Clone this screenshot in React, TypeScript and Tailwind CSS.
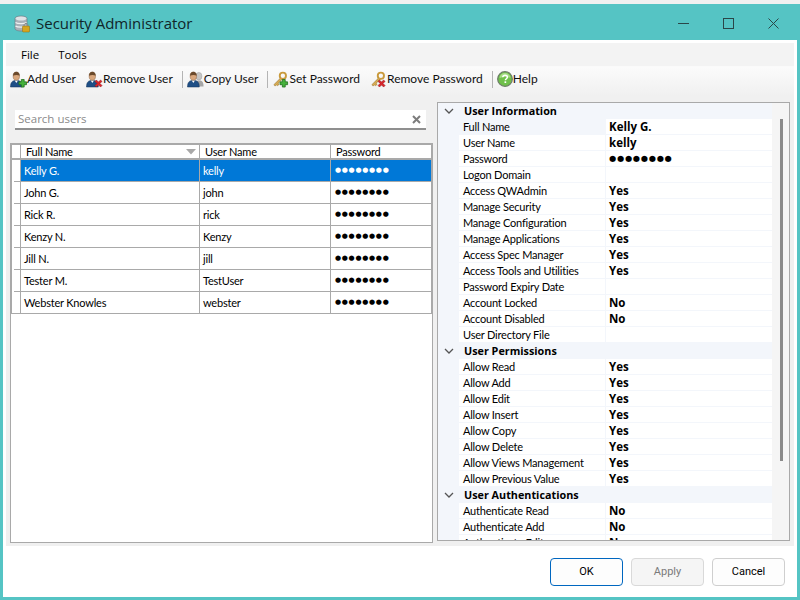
import React from 'react';

const users = [
  { name: 'Kelly G.', user: 'kelly' },
  { name: 'John G.', user: 'john' },
  { name: 'Rick R.', user: 'rick' },
  { name: 'Kenzy N.', user: 'Kenzy' },
  { name: 'Jill N.', user: 'jill' },
  { name: 'Tester M.', user: 'TestUser' },
  { name: 'Webster Knowles', user: 'webster' },
];

const DOTS = '●●●●●●●●';

const sections = [
  {
    title: 'User Information',
    rows: [
      ['Full Name', 'Kelly G.'],
      ['User Name', 'kelly'],
      ['Password', DOTS],
      ['Logon Domain', ''],
      ['Access QWAdmin', 'Yes'],
      ['Manage Security', 'Yes'],
      ['Manage Configuration', 'Yes'],
      ['Manage Applications', 'Yes'],
      ['Access Spec Manager', 'Yes'],
      ['Access Tools and Utilities', 'Yes'],
      ['Password Expiry Date', ''],
      ['Account Locked', 'No'],
      ['Account Disabled', 'No'],
      ['User Directory File', ''],
    ],
  },
  {
    title: 'User Permissions',
    rows: [
      ['Allow Read', 'Yes'],
      ['Allow Add', 'Yes'],
      ['Allow Edit', 'Yes'],
      ['Allow Insert', 'Yes'],
      ['Allow Copy', 'Yes'],
      ['Allow Delete', 'Yes'],
      ['Allow Views Management', 'Yes'],
      ['Allow Previous Value', 'Yes'],
    ],
  },
  {
    title: 'User Authentications',
    rows: [
      ['Authenticate Read', 'No'],
      ['Authenticate Add', 'No'],
      ['Authenticate Edit', 'No'],
    ],
  },
];

const Plus = () => (
  <path d="M9.5 8.5h2.5V6h3v2.5H17.5v3H15V14h-3v-2.5H9.5z" fill="#46b23c" stroke="#1f6b1a" strokeWidth="0.8" />
);

const Cross = () => (
  <path d="M9.5 8l1.5-1.5 2.2 2.2 2.2-2.2L17 8l-2.2 2.2L17 12.4 15.4 14l-2.2-2.2L11 14l-1.5-1.6 2.2-2.2z" fill="#d8272d" stroke="#8a1418" strokeWidth="0.5" />
);

const Person = () => (
  <g>
    <path d="M0.5 16.5c0-4.500 1.500-6.500 4.500-7h3.500c3 .5 4.500 2.500 4.500 7z" fill="#1f4f86" stroke="#123257" strokeWidth="0.5" />
    <path d="M5 9.500l1.700 2.800 1.700-2.800z" fill="#fff" />
    <ellipse cx="6.700" cy="5" rx="3.400" ry="4.300" fill="#d9a77d" stroke="#8a6242" strokeWidth="0.5" />
    <path d="M3.200 4.500c0-3 1.500-4.200 3.500-4.200s3.500 1.200 3.500 4.200C8.700 3.500 5.200 3.500 3.200 4.500z" fill="#6b4a2c" />
  </g>
);

const UserIcon = ({ kind }: { kind: 'add' | 'remove' | 'copy' }) => (
  <svg width="17" height="17" viewBox="0 0 18 17" className="shrink-0">
    {kind === 'copy' && (
      <g opacity="0.75">
        <ellipse cx="12.500" cy="5" rx="3.300" ry="4" fill="#b5b5b5" stroke="#777" strokeWidth="0.5" />
        <path d="M7 16c0-4 2-6 4.500-6.500h3c2 .5 3 2.500 3 6.500z" fill="#8c8c8c" />
      </g>
    )}
    <Person />
    {kind === 'add' && <g transform="translate(0 2.500)"><Plus /></g>}
    {kind === 'remove' && <g transform="translate(0 2.500)"><Cross /></g>}
  </svg>
);

const KeyIcon = ({ kind }: { kind: 'add' | 'remove' }) => (
  <svg width="17" height="17" viewBox="0 0 18 17" className="shrink-0">
    <circle cx="11.500" cy="4.500" r="3.300" fill="none" stroke="#c99a3c" strokeWidth="2" />
    <path d="M9 7L2 14l1.500 1.500L5 14l1 1 1.500-1.500-1-1L11 8" fill="#d9ad55" stroke="#8f6a20" strokeWidth="0.6" />
    {kind === 'add' ? <g transform="translate(-1 2.500)"><Plus /></g> : <g transform="translate(-1 2.500)"><Cross /></g>}
  </svg>
);

const HelpIcon = () => (
  <svg width="16" height="16" viewBox="0 0 16 16" className="shrink-0">
    <circle cx="8" cy="8" r="7.300" fill="#6fc04a" stroke="#6e7f68" strokeWidth="1.300" />
    <path d="M2.500 7a5.500 5 0 0 1 11 0c-3-1.500-8-1.500-11 0z" fill="#a5dd84" />
    <path d="M5.800 6.300C5.900 4.900 6.800 4.200 8.100 4.200c1.400 0 2.300.8 2.300 1.900 0 1.700-2 1.600-2 3.200" fill="none" stroke="#fff" strokeWidth="1.500" />
    <rect x="7.500" y="10.300" width="1.700" height="1.700" fill="#fff" />
  </svg>
);

const AppIcon = () => (
  <svg width="16" height="18" viewBox="0 0 16 18">
    <path d="M1 3.500C1 2 3.500 1 7 1s6 1 6 2.500v10C13 15 10.500 16 7 16s-6-1-6-2.500z" fill="#a9b0b8" stroke="#6f767e" strokeWidth="0.6" />
    <ellipse cx="7" cy="3.500" rx="5.500" ry="2" fill="#dfe3e7" />
    <path d="M1.500 7.500c2 1.500 9 1.500 11 0M1.500 11c2 1.500 9 1.500 11 0" fill="none" stroke="#eef0f2" strokeWidth="1.200" />
    <rect x="8.500" y="11" width="7" height="6" rx="0.800" fill="#d6a51f" stroke="#8f6d10" strokeWidth="0.5" />
    <path d="M10.200 11V9.500a2 2 0 0 1 3.600 0V11" fill="none" stroke="#8b8b8b" strokeWidth="1" />
  </svg>
);

const Sep = () => <div className="w-px h-[17px] bg-[#b4b4b4] ml-[4px] -mr-px" />;

const ToolItem = ({ icon, label }: { icon: React.ReactNode; label: string }) => (
  <div className="flex items-center px-[5px]">
    {icon}
    <span>{label}</span>
  </div>
);

const App = () => {
  return (
    <div className="w-[800px] h-[600px] bg-[#f0f0f0] pt-[4px] overflow-hidden text-[12px] text-black" style={{ fontFamily: 'Lato, "Noto Sans", sans-serif' }}>
      <div className="h-[596px] bg-[#55c4c4] px-[3px] pb-[3px] flex flex-col">
        {/* title bar */}
        <div className="h-[36px] shrink-0 flex items-center pl-[11px] pt-[3px] text-[#10262a]">
          <AppIcon />
          <span className="ml-[6px] text-[15px]" style={{ fontFamily: '"Open Sans", sans-serif' }}>Security Administrator</span>
          <div className="ml-auto flex items-center gap-[34px] pr-[18px]">
            <div className="w-[11px] h-px bg-[#2a4648]" />
            <div className="w-[11px] h-[11px] border border-[#2a4648]" />
            <svg width="11" height="11" viewBox="0 0 11 11">
              <path d="M0.500 0.500l10 10M10.500 0.500l-10 10" stroke="#2a4648" strokeWidth="1" />
            </svg>
          </div>
        </div>

        <div className="flex-1 bg-white flex flex-col px-[3px] pt-[3px]">
          <div className="h-[503px] bg-[#f0f0f0] flex flex-col">
            {/* menu */}
            <div className="h-[24px] flex items-center pl-[15px] gap-[19px] bg-[#f3f3f3] text-[11.500px] border-b border-[#fafafa]" style={{ fontFamily: '"Open Sans", sans-serif' }}>
              <span>File</span>
              <span>Tools</span>
            </div>
            {/* toolbar */}
            <div className="h-[29px] flex items-start pt-[2px] bg-gradient-to-b from-[#fbfbfb] to-[#f0f0f0] text-[12px] text-[#111]">
              <div className="flex items-center h-[20px] -ml-px">
                <ToolItem icon={<UserIcon kind="add" />} label="Add User" />
                <ToolItem icon={<UserIcon kind="remove" />} label="Remove User" />
                <Sep />
                <ToolItem icon={<UserIcon kind="copy" />} label="Copy User" />
                <Sep />
                <ToolItem icon={<KeyIcon kind="add" />} label="Set Password" />
                <ToolItem icon={<KeyIcon kind="remove" />} label="Remove Password" />
                <Sep />
                <ToolItem icon={<HelpIcon />} label="Help" />
              </div>
            </div>

            <div className="flex-1 flex min-h-0 pl-[4px] pt-[6px]">
              {/* left: search and users */}
              <div className="w-[423px] shrink-0 flex flex-col">
                <div className="mx-[5px] w-[411px] h-[20px] mt-[8px] bg-white border-b-2 border-[#8f8f8f] flex items-center px-[3px] text-[11.500px] text-[#8a8a8a]" style={{ fontFamily: '"Open Sans", sans-serif' }}>
                  <span>Search users</span>
                  <svg width="9" height="9" viewBox="0 0 9 9" className="ml-auto mr-[2px]">
                    <path d="M1 1l7 7M8 1l-7 7" stroke="#7d7d7d" strokeWidth="2" />
                  </svg>
                </div>
                <div className="mt-[13px] h-[400px] bg-white border border-[#a9a9a9] text-[11px] tracking-[-0.2px]">
                  <div className="grid grid-cols-[9px_179px_131px_1fr] border-l border-r border-[#a9a9a9]">
                    <div className="h-[16px] border-b-2 border-r border-[#a9a9a9] border-t" />
                    <div className="h-[16px] border-b-2 border-r border-t border-[#a9a9a9] pl-[5px] pt-px flex items-center justify-between pr-[3px]">
                      <span>Full Name</span>
                      <svg width="10" height="6" viewBox="0 0 10 6"><path d="M0 0h10L5 5.500z" fill="#a8a8a8" /></svg>
                    </div>
                    <div className="h-[16px] border-b-2 border-r border-t border-[#a9a9a9] pl-[5px] pt-px flex items-center">User Name</div>
                    <div className="h-[16px] border-b-2 border-t border-[#a9a9a9] pl-[5px] pt-px flex items-center">Password</div>
                    {users.map((u, i) => {
                      const sel = i === 0;
                      const cell = `h-[22px] border-b border-[#a9a9a9] flex items-center pl-[3px] ${sel ? 'bg-[#0078d7] text-white' : ''}`;
                      return (
                        <React.Fragment key={u.user}>
                          <div className="h-[22px] border-r border-[#a9a9a9] flex justify-end items-end">
                            <div className={`h-px bg-[#a9a9a9] ${i === users.length - 1 ? 'w-full' : 'w-[6px]'}`} />
                          </div>
                          <div className={`${cell} border-r pt-px`}>{u.name}</div>
                          <div className={`${cell} border-r pt-px`}>{u.user}</div>
                          <div className={`${cell} pl-[4px]`}>
                            <span className="text-[7px] leading-none tracking-[0.7px]" style={{ fontFamily: '"DejaVu Sans", sans-serif' }}>{DOTS}</span>
                          </div>
                        </React.Fragment>
                      );
                    })}
                  </div>
                </div>
              </div>

              {/* right: property grid */}
              <div className="relative ml-[4px] w-[353px] h-[439px] bg-[#f5f5f5] border border-[#a9a9a9] overflow-hidden text-[11px] tracking-[-0.2px]">
                <div className="w-[334px]">
                  {sections.map(s => (
                    <div key={s.title}>
                      <div className="h-[16px] bg-[#f3f6fb] flex items-center font-bold text-[10.800px] tracking-normal" style={{ fontFamily: '"Open Sans", sans-serif' }}>
                        <svg width="10" height="6" viewBox="0 0 10 6" className="ml-[6px]">
                          <path d="M1 1l4 4 4-4" fill="none" stroke="#555" strokeWidth="1.300" />
                        </svg>
                        <span className="ml-[10px]">{s.title}</span>
                      </div>
                      {s.rows.map(([k, v]) => {
                        const selected = k === 'Full Name';
                        return (
                          <div key={k} className="h-[16px] flex bg-[#f3f6fb]">
                            <div className="w-[21px] shrink-0" />
                            <div className={`w-[146px] shrink-0 pl-[4px] pt-[2px] flex items-center border-b border-[#f3f6fb] ${selected ? 'bg-[#f3f6fb]' : 'bg-white'}`}>
                              {k}
                            </div>
                            <div className="flex-1 pl-[3px] ml-px bg-white border-b border-[#f3f6fb] flex items-center font-bold text-[11.500px] tracking-normal" style={{ fontFamily: '"Open Sans", sans-serif' }}>
                              {v === DOTS ? (
                                <span className="text-[8.200px] leading-none tracking-[0.8px]" style={{ fontFamily: '"DejaVu Sans", sans-serif' }}>{v}</span>
                              ) : v}
                            </div>
                          </div>
                        );
                      })}
                    </div>
                  ))}
                </div>
                <div className="absolute left-[342px] top-[16px] w-[3px] h-[342px] bg-[#8a8a8a]" />
              </div>
            </div>
          </div>

          {/* buttons */}
          <div className="flex-1 flex justify-end items-start gap-[8px] pt-[12px] pr-[9px] text-[11px]" style={{ fontFamily: 'Roboto, sans-serif' }}>
            <div className="w-[73px] h-[28px] rounded-[4px] border border-[#0067c0] bg-[#fdfdfd] flex items-center justify-center">OK</div>
            <div className="w-[73px] h-[28px] rounded-[4px] border border-[#d9d9d9] bg-[#f5f5f5] text-[#7a7a7a] flex items-center justify-center">Apply</div>
            <div className="w-[73px] h-[28px] rounded-[4px] border border-[#cfcfcf] bg-[#fdfdfd] flex items-center justify-center">Cancel</div>
          </div>
        </div>
      </div>
    </div>
  );
};

export default App;
